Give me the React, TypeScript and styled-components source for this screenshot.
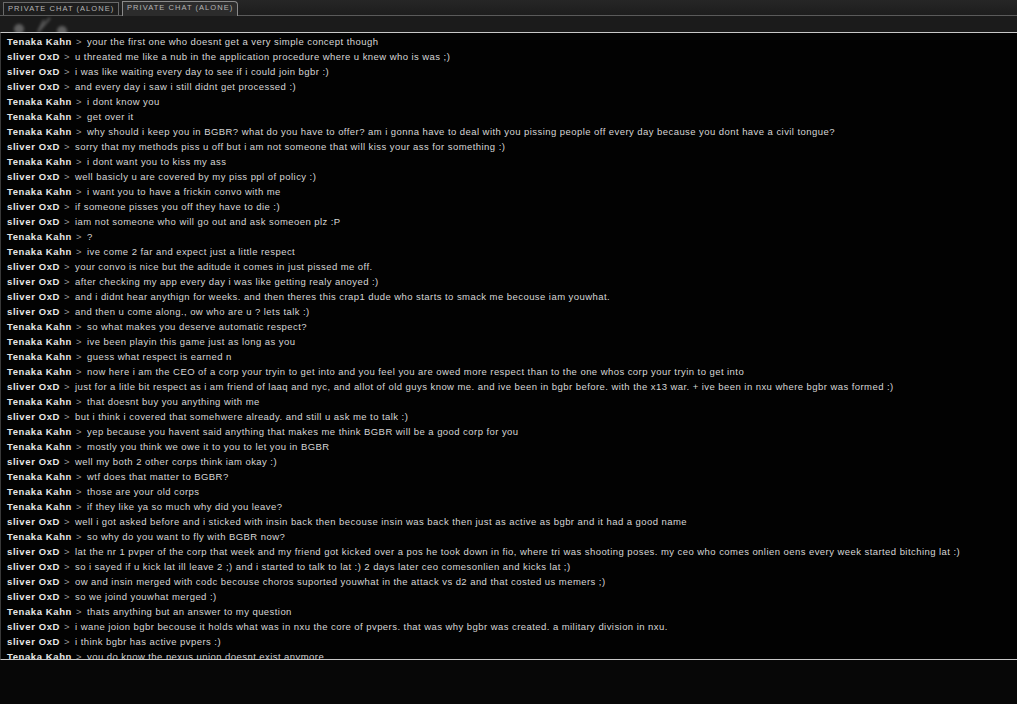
import React from "react";
import styled, { createGlobalStyle } from "styled-components";

const GlobalStyle = createGlobalStyle`
  html, body {
    margin: 0;
    padding: 0;
    background: #070707;
  }
  body {
    font-family: "Liberation Sans", Arial, sans-serif;
  }
`;

type Line = [string, string];

const T = "Tenaka Kahn";
const S = "sliver OxD";

const lines: Line[] = [
  [T, "your the first one who doesnt get a very simple concept though"],
  [S, "u threated me like a nub in the application procedure where u knew who is was ;)"],
  [S, "i was like waiting every day to see if i could join bgbr :)"],
  [S, "and every day i saw i still didnt get processed :)"],
  [T, "i dont know you"],
  [T, "get over it"],
  [T, "why should i keep you in BGBR? what do you have to offer? am i gonna have to deal with you pissing people off every day because you dont have a civil tongue?"],
  [S, "sorry that my methods piss u off but i am not someone that will kiss your ass for something :)"],
  [T, "i dont want you to kiss my ass"],
  [S, "well basicly u are covered by my piss ppl of policy :)"],
  [T, "i want you to have a frickin convo with me"],
  [S, "if someone pisses you off they have to die :)"],
  [S, "iam not someone who will go out and ask someoen plz :P"],
  [T, "?"],
  [T, "ive come 2 far and expect just a little respect"],
  [S, "your convo is nice but the aditude it comes in just pissed me off."],
  [S, "after checking my app every day i was like getting realy anoyed :)"],
  [S, "and i didnt hear anythign for weeks. and then theres this crap1 dude who starts to smack me becouse iam youwhat."],
  [S, "and then u come along., ow who are u ? lets talk :)"],
  [T, "so what makes you deserve automatic respect?"],
  [T, "ive been playin this game just as long as you"],
  [T, "guess what respect is earned n"],
  [T, "now here i am the CEO of a corp your tryin to get into and you feel you are owed more respect than to the one whos corp your tryin to get into"],
  [S, "just for a litle bit respect as i am friend of laaq and nyc, and allot of old guys know me. and ive been in bgbr before. with the x13 war. + ive been in nxu where bgbr was formed :)"],
  [T, "that doesnt buy you anything with me"],
  [S, "but i think i covered that somehwere already. and still u ask me to talk :)"],
  [T, "yep because you havent said anything that makes me think BGBR will be a good corp for you"],
  [T, "mostly you think we owe it to you to let you in BGBR"],
  [S, "well my both 2 other corps think iam okay :)"],
  [T, "wtf does that matter to BGBR?"],
  [T, "those are your old corps"],
  [T, "if they like ya so much why did you leave?"],
  [S, "well i got asked before and i sticked with insin back then becouse insin was back then just as active as bgbr and it had a good name"],
  [T, "so why do you want to fly with BGBR now?"],
  [S, "lat the nr 1 pvper of the corp that week and my friend got kicked over a pos he took down in fio, where tri was shooting poses. my ceo who comes onlien oens every week started bitching lat :)"],
  [S, "so i sayed if u kick lat ill leave 2 ;) and i started to talk to lat :) 2 days later ceo comesonlien and kicks lat ;)"],
  [S, "ow and insin merged with codc becouse choros suported youwhat in the attack vs d2 and that costed us memers ;)"],
  [S, "so we joind youwhat merged :)"],
  [T, "thats anything but an answer to my question"],
  [S, "i wane joion bgbr becouse it holds what was in nxu the core of pvpers. that was why bgbr was created. a military division in nxu."],
  [S, "i think bgbr has active pvpers :)"],
  [T, "you do know the nexus union doesnt exist anymore"],
];

const Window = styled.div`
  width: 1017px;
  height: 704px;
  background: #070707;
  display: flex;
  flex-direction: column;
  overflow: hidden;
`;

const TabBar = styled.div`
  height: 15px;
  background: linear-gradient(#262626, #1d1d1d);
  display: flex;
  align-items: flex-end;
  padding-left: 3px;
  gap: 3px;
  border-bottom: 1px solid #5a5a5a;
`;

const Tab = styled.div<{ $active?: boolean }>`
  height: ${(p) => (p.$active ? 15 : 13)}px;
  box-sizing: border-box;
  width: 116px;
  border: 1px solid ${(p) => (p.$active ? "#8a8a8a" : "#6a6a6a")};
  border-bottom: none;
  border-radius: ${(p) => (p.$active ? "0 4px 0 0" : "0")};
  background: ${(p) => (p.$active ? "#2c2c2c" : "#1e1e1e")};
  margin-bottom: ${(p) => (p.$active ? "-1px" : "0")};
  color: #b4b4b4;
  font-size: 7.5px;
  letter-spacing: 1.05px;
  line-height: ${(p) => (p.$active ? 11 : 12)}px;
  padding-left: 4px;
  white-space: nowrap;
  overflow: hidden;
`;

const Header = styled.div`
  height: 16px;
  background: #1b1b1b;
  position: relative;
  overflow: hidden;
`;

const Logo = styled.svg`
  position: absolute;
  left: 10px;
  top: -4px;
`;

const Panel = styled.div`
  height: 628px;
  background: #020202;
  border-top: 1px solid #c8c8c8;
  border-bottom: 1px solid #c8c8c8;
  border-left: 1px solid #3a3a3a;
  padding: 1px 0 0 6px;
  box-sizing: border-box;
  overflow: hidden;
`;

const Row = styled.div`
  height: 15px;
  line-height: 15px;
  font-size: 9.5px;
  letter-spacing: 0.44px;
  white-space: nowrap;
  color: #d6d6d6;
`;

const Name = styled.span`
  font-weight: bold;
  color: #e8e8e8;
  letter-spacing: 0.6px;
`;

const Sep = styled.span`
  color: #9a9a9a;
  margin: 0 5px 0 4px;
`;

export default function App() {
  return (
    <>
      <GlobalStyle />
      <Window>
        <TabBar>
          <Tab>PRIVATE CHAT (ALONE)</Tab>
          <Tab $active>PRIVATE CHAT (ALONE)</Tab>
        </TabBar>
        <Header>
          <Logo width="60" height="24" viewBox="0 0 60 24">
            <defs>
              <filter id="blur">
                <feGaussianBlur stdDeviation="1.6" />
              </filter>
            </defs>
            <g filter="url(#blur)" opacity="0.35">
              <circle cx="9" cy="17" r="5" fill="#ddd" />
              <circle cx="52" cy="19" r="5" fill="#ddd" />
              <path d="M28 20 L34 8 M28 20 L40 6" stroke="#ccc" strokeWidth="2" fill="none" />
            </g>
          </Logo>
        </Header>
        <Panel>
          {lines.map(([who, text], i) => (
            <Row key={i}>
              <Name>{who}</Name>
              <Sep>&gt;</Sep>
              {text}
            </Row>
          ))}
        </Panel>
      </Window>
    </>
  );
}
